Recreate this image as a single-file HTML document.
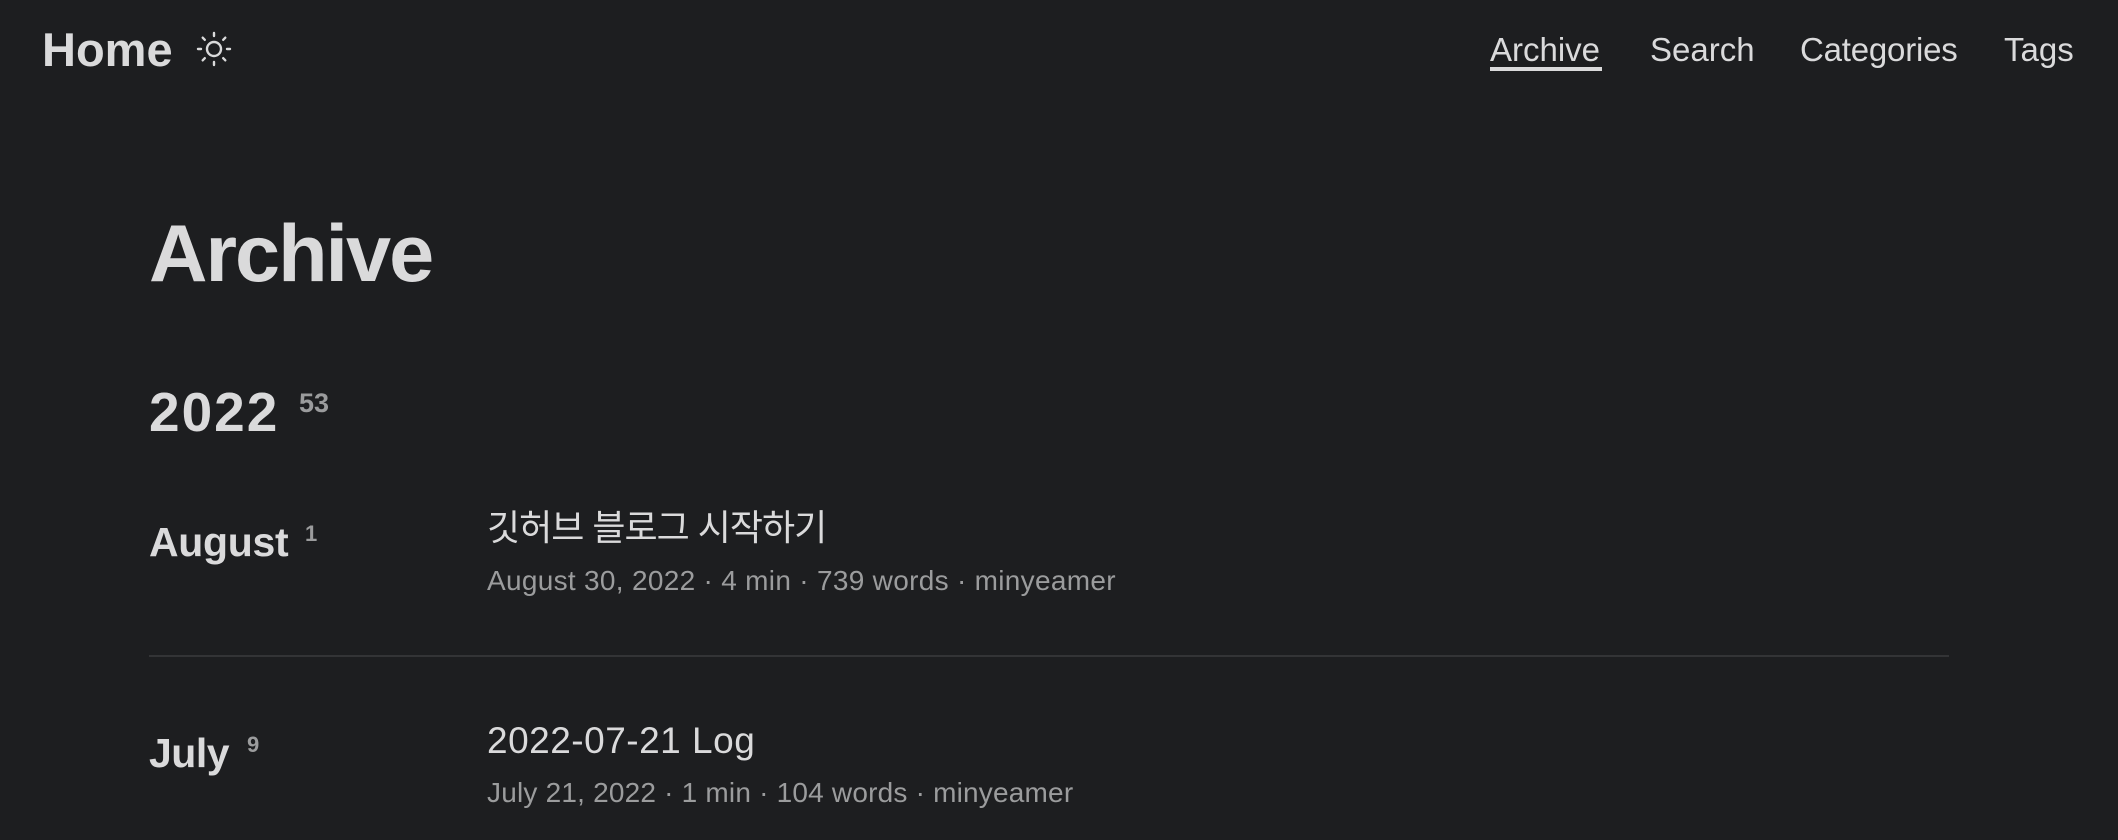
<!DOCTYPE html>
<html><head><meta charset="utf-8">
<style>
html,body{margin:0;padding:0;background:#1d1e20;width:2118px;height:840px;overflow:hidden;}
body{position:relative;font-family:"Liberation Sans","Noto Sans CJK KR",sans-serif;color:#dadadb;}
.a{position:absolute;white-space:nowrap;}
.b{font-weight:bold;}
.g{color:#9b9c9d;}
</style></head><body>
<div class="a b" style="left:42px;top:26px;font-size:47px;line-height:47px;">Home</div>
<svg class="a" style="left:196px;top:31px" width="36" height="36" viewBox="0 0 36 36" fill="none" stroke="#dadadb" stroke-width="2.4" stroke-linecap="round">
<circle cx="18" cy="18" r="7"/>
<line x1="18" y1="2" x2="18" y2="5"/><line x1="18" y1="31" x2="18" y2="34"/>
<line x1="2" y1="18" x2="5" y2="18"/><line x1="31" y1="18" x2="34" y2="18"/>
<line x1="6.7" y1="6.7" x2="8.8" y2="8.8"/><line x1="27.2" y1="27.2" x2="29.3" y2="29.3"/>
<line x1="6.7" y1="29.3" x2="8.8" y2="27.2"/><line x1="27.2" y1="8.8" x2="29.3" y2="6.7"/>
</svg>
<div class="a" style="left:1490px;top:33px;font-size:33px;line-height:33px;">Archive</div>
<div class="a" style="left:1490px;top:67px;width:112px;height:4px;background:#dadadb;"></div>
<div class="a" style="left:1650px;top:33px;font-size:33px;line-height:33px;">Search</div>
<div class="a" style="left:1800px;top:33px;font-size:33px;line-height:33px;letter-spacing:-0.2px;">Categories</div>
<div class="a" style="left:2004px;top:33px;font-size:33px;line-height:33px;">Tags</div>

<div class="a b" style="left:149px;top:214px;font-size:81px;line-height:81px;letter-spacing:-2px;">Archive</div>
<div class="a b" style="left:149px;top:385px;font-size:55px;line-height:55px;letter-spacing:2px;">2022</div>
<div class="a b g" style="left:299px;top:390px;font-size:27px;line-height:27px;">53</div>

<div class="a b" style="left:149px;top:522px;font-size:41px;line-height:41px;letter-spacing:-0.3px;">August</div>
<div class="a b g" style="left:305px;top:523px;font-size:22px;line-height:22px;">1</div>
<div class="a" style="left:487px;top:506px;font-size:36px;line-height:44px;letter-spacing:-1px;">깃허브 블로그 시작하기</div>
<div class="a g" style="left:487px;top:567px;font-size:28px;line-height:28px;letter-spacing:0.3px;">August 30, 2022 · 4 min · 739 words · minyeamer</div>

<div class="a" style="left:149px;top:655px;width:1800px;height:2px;background:#333436;"></div>

<div class="a b" style="left:149px;top:733px;font-size:41px;line-height:41px;letter-spacing:-0.5px;">July</div>
<div class="a b g" style="left:247px;top:734px;font-size:22px;line-height:22px;">9</div>
<div class="a" style="left:487px;top:723px;font-size:37px;line-height:36px;letter-spacing:0.5px;">2022-07-21 Log</div>
<div class="a g" style="left:487px;top:779px;font-size:28px;line-height:28px;letter-spacing:0.2px;">July 21, 2022 · 1 min · 104 words · minyeamer</div>
</body></html>
